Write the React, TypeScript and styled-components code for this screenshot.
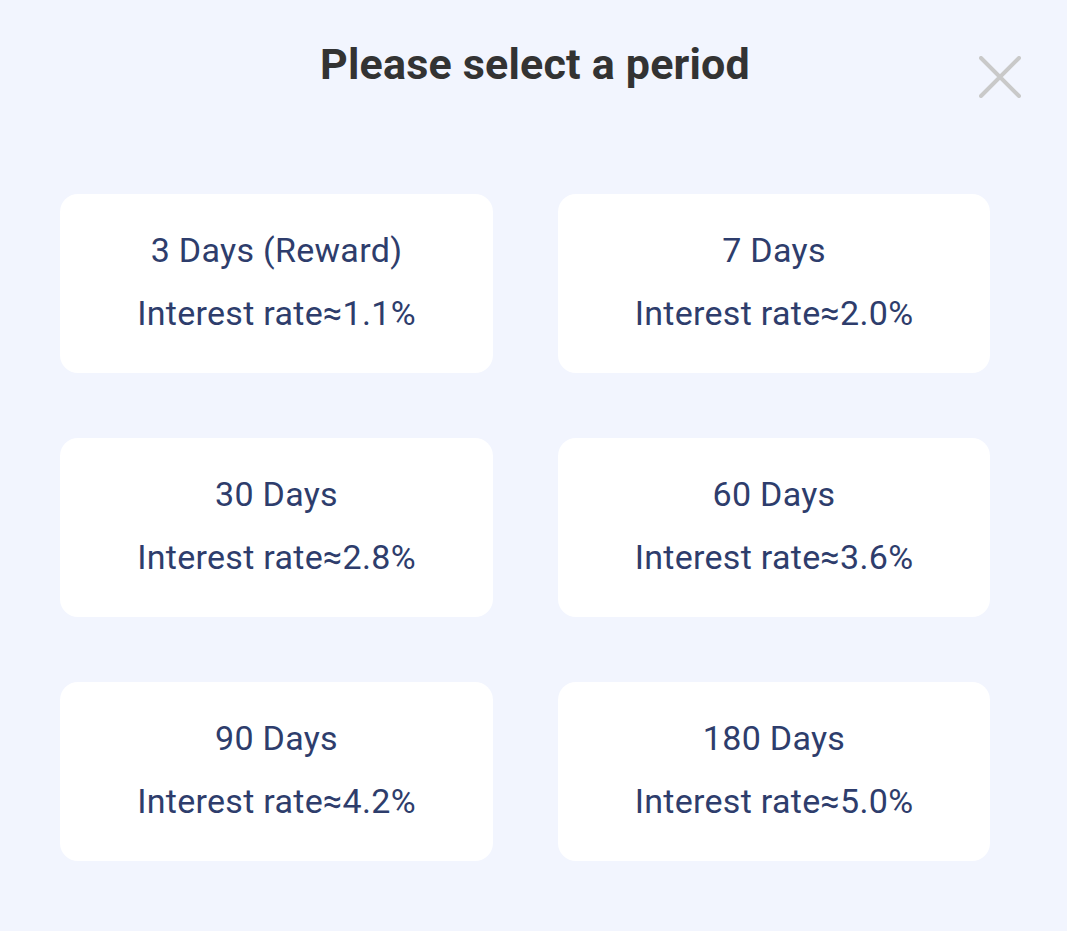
import React from "react";
import styled, { createGlobalStyle } from "styled-components";

const GlobalStyle = createGlobalStyle`
  html, body {
    margin: 0;
    padding: 0;
    background: #f2f5fe;
    font-family: Roboto, "Noto Sans", Arial, sans-serif;
  }
`;

const Page = styled.div`
  min-height: 931px;
  background: #f2f5fe;
  display: flex;
  flex-direction: column;
`;

const Header = styled.header`
  position: relative;
  padding-top: 39px;
  display: flex;
  justify-content: center;
`;

const Title = styled.h1`
  margin: 0;
  font-size: 43px;
  line-height: 50px;
  font-weight: 700;
  letter-spacing: 0.2px;
  color: #333333;
  padding-left: 3px;
`;

const CloseButton = styled.button`
  position: absolute;
  top: 56px;
  right: 46px;
  width: 42px;
  height: 42px;
  padding: 0;
  border: none;
  background: transparent;
  cursor: pointer;
  display: flex;
`;

const Grid = styled.div`
  margin-top: 105px;
  padding: 0 77px 0 60px;
  display: grid;
  grid-template-columns: 433px 432px;
  column-gap: 65px;
  row-gap: 65px;
`;

const Card = styled.button`
  height: 179px;
  box-sizing: border-box;
  border: none;
  border-radius: 18px;
  background: #ffffff;
  padding: 36px 0 0;
  display: flex;
  flex-direction: column;
  align-items: center;
  gap: 23px;
  font-family: Roboto, "Noto Sans", Arial, sans-serif;
  color: #2e3d6c;
  cursor: pointer;
`;

const Line = styled.span`
  font-size: 34px;
  line-height: 40px;
  font-weight: 400;
  letter-spacing: 0.3px;
  white-space: nowrap;
`;

const periods = [
  { label: "3 Days (Reward)", rate: "1.1%" },
  { label: "7 Days", rate: "2.0%" },
  { label: "30 Days", rate: "2.8%" },
  { label: "60 Days", rate: "3.6%" },
  { label: "90 Days", rate: "4.2%" },
  { label: "180 Days", rate: "5.0%" },
];

export default function App() {
  return (
    <Page>
      <GlobalStyle />
      <Header>
        <Title>Please select a period</Title>
        <CloseButton aria-label="Close">
          <svg width="42" height="42" viewBox="0 0 42 42">
            <path
              d="M2 2 L40 40 M40 2 L2 40"
              stroke="#c9c9c9"
              strokeWidth="4"
              strokeLinecap="round"
              fill="none"
            />
          </svg>
        </CloseButton>
      </Header>
      <Grid>
        {periods.map((p) => (
          <Card key={p.label}>
            <Line>{p.label}</Line>
            <Line>Interest rate≈{p.rate}</Line>
          </Card>
        ))}
      </Grid>
    </Page>
  );
}
